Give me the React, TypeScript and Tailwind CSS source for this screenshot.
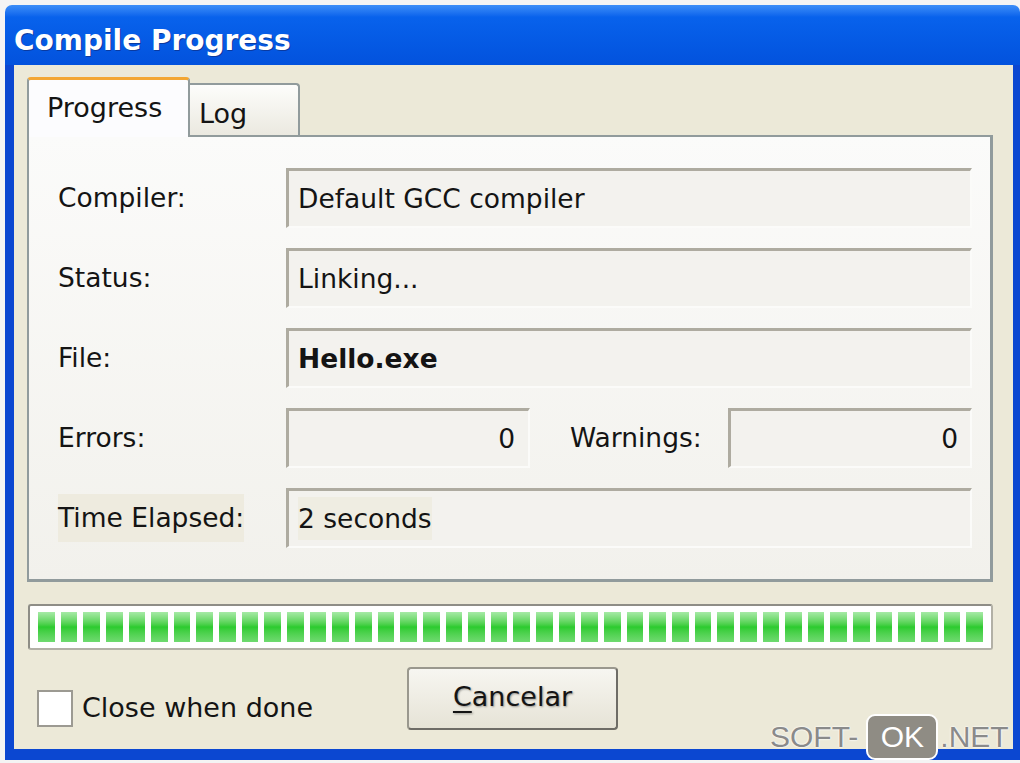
import React from "react";

const font = { fontFamily: '"DejaVu Sans", Verdana, sans-serif' };

function Field({ children, className = "" }: { children?: React.ReactNode; className?: string }) {
  return (
    <div
      className={
        "h-[60px] flex items-center border-t-[3px] border-l-[3px] border-t-[#aeaba0] border-l-[#aeaba0] border-r-[2px] border-b-[2px] border-r-[#fbfbf9] border-b-[#fbfbf9] bg-[#f3f2ee] text-[26.5px] text-[#141414] " +
        className
      }
    >
      {children}
    </div>
  );
}

function Label({ children, className = "" }: { children: React.ReactNode; className?: string }) {
  return <div className={"text-[26.5px] text-[#141414] " + className}>{children}</div>;
}

export default function App() {
  const blocks = Array.from({ length: 42 });
  return (
    <div className="w-[1020px] h-[763px] bg-[#f4f4f4] relative overflow-hidden pt-[5px] pl-[5px]" style={font}>
      <div className="w-[1015px] h-[755px] flex flex-col">
        {/* Title bar */}
        <div className="h-[60px] shrink-0 rounded-t-[7px] bg-linear-to-b from-[#3c8ef8] via-[#0862ec] via-20% to-[#0352dd] flex items-center pl-[9px] pt-[12px]">
          <span className="text-white font-bold text-[28px] leading-none [text-shadow:1px_1px_0_#0a3aa0]">
            Compile Progress
          </span>
        </div>
        {/* Client */}
        <div className="flex-1 bg-[#ece9d8] border-l-[9px] border-r-[7px] border-b-[11px] border-[#0b47d1] pl-[13px] pr-[20px] pt-[12px] flex flex-col">
          {/* Tabs */}
          <div className="h-[58px] flex items-end relative z-10">
            <div className="w-[163px] h-[60px] -mb-[2px] bg-[#fcfcfe] border-t-[3px] border-t-[#f3a633] border-l-2 border-r-2 border-l-[#919b9c] border-r-[#919b9c] rounded-t-[4px] flex items-start pt-[8px] pl-[18px] text-[27px] text-[#141414]">
              Progress
            </div>
            <div className="w-[110px] h-[52px] bg-linear-to-b from-[#fdfdfb] to-[#ebe9e0] border-t-2 border-r-2 border-[#919b9c] rounded-tr-[4px] flex items-start pt-[9px] pl-[9px] text-[27px] text-[#141414]">
              Log
            </div>
          </div>
          {/* Panel */}
          <div className="h-[447px] border-2 border-[#919b9c] border-r-[3px] border-b-[3px] bg-linear-to-b from-[#fbfbfa] to-[#f2f1ec] pt-[31px] pl-[29px] pr-[18px] flex flex-col gap-[20px]">
            <div className="flex items-center">
              <Label className="w-[228px]">Compiler:</Label>
              <Field className="flex-1 pl-[9px]">Default GCC compiler</Field>
            </div>
            <div className="flex items-center">
              <Label className="w-[228px]">Status:</Label>
              <Field className="flex-1 pl-[9px]">Linking...</Field>
            </div>
            <div className="flex items-center">
              <Label className="w-[228px]">File:</Label>
              <Field className="flex-1 pl-[9px] font-bold">Hello.exe</Field>
            </div>
            <div className="flex items-center">
              <Label className="w-[228px]">Errors:</Label>
              <Field className="w-[244px] justify-end pr-[13px]">0</Field>
              <Label className="w-[158px] pl-[40px] box-content">Warnings:</Label>
              <Field className="flex-1 justify-end pr-[12px]">0</Field>
            </div>
            <div className="flex items-center">
              <div className="w-[228px]">
                <span className="inline-block bg-[#eeebdf] py-[4px] text-[26.5px] text-[#141414]">Time Elapsed:</span>
              </div>
              <Field className="flex-1 pl-[9px]">
                <span className="bg-[#efede2] py-[2px]">2 seconds</span>
              </Field>
            </div>
          </div>
          {/* Progress bar */}
          <div className="mt-[22px] h-[46px] ml-[1px] rounded-[3px] border-2 border-[#8e8d86] border-r-[#b2b0a6] border-b-[#b2b0a6] bg-white px-[8px] py-[6px] flex gap-[6px]">
            {blocks.map((_, i) => (
              <div key={i} className="flex-1 bg-linear-to-b from-[#a6eaa6] via-[#2bcb2e] to-[#6fda70]" />
            ))}
          </div>
          {/* Bottom row */}
          <div className="mt-[17px] flex items-start">
            <div className="ml-[10px] w-[370px] mt-[21px] flex items-center">
              <div className="w-[36px] h-[37px] bg-white border-2 border-[#9c9a92]" />
              <span className="ml-[9px] text-[27px] text-[#141414]">Close when done</span>
            </div>
            <div className="w-[211px] h-[63px] rounded-[4px] border-2 border-[#9a988e] border-r-[#6e6c66] border-b-[#6e6c66] bg-linear-to-b from-[#f7f6f1] to-[#e6e3d6] flex items-center justify-center pb-[2px]">
              <span className="text-[27px] text-[#141414] [text-shadow:1px_1px_2px_rgba(0,0,0,0.35)]">
                <span className="underline underline-offset-[5px]">C</span>ancelar
              </span>
            </div>
          </div>
        </div>
      </div>
      {/* Watermark overlay */}
      <div
        className="absolute left-[770px] top-[714px] flex items-center text-[30px] leading-none"
        style={{ fontFamily: '"Liberation Sans", Arial, sans-serif' }}
      >
        <span className="text-[#8a8a8a] [text-shadow:0_0_2px_#fff,0_0_2px_#fff]">SOFT-</span>
        <span className="ml-[8px] h-[46px] w-[72px] rounded-[9px] border-2 border-white bg-[#8f8c84] text-white flex items-center justify-center">
          OK
        </span>
        <span className="ml-[2px] text-[#8a8a8a] [text-shadow:0_0_2px_#fff,0_0_2px_#fff]">.NET</span>
      </div>
    </div>
  );
}
